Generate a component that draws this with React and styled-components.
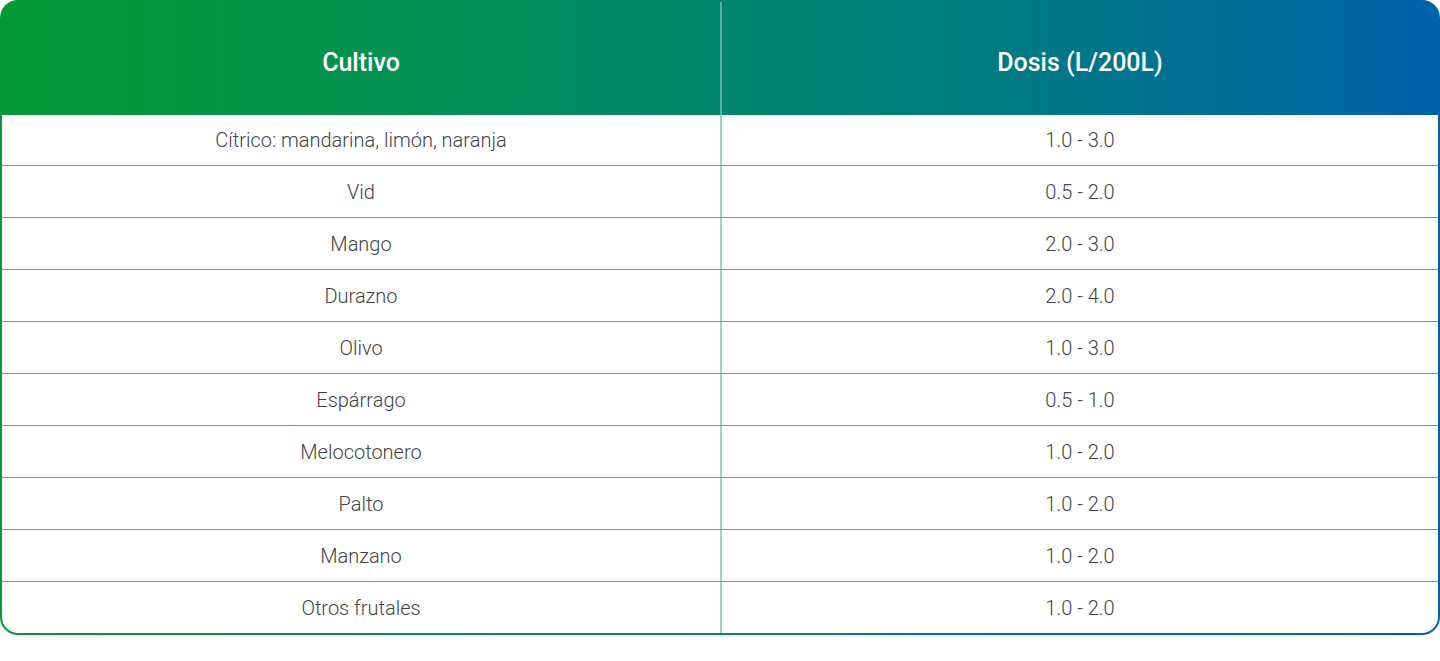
import React from 'react';
import styled, { createGlobalStyle } from 'styled-components';

const GlobalStyle = createGlobalStyle`
  *, *::before, *::after {
    box-sizing: border-box;
  }
  body {
    margin: 0;
    background: #ffffff;
    font-family: Roboto, "Liberation Sans", Arial, sans-serif;
  }
`;

const Frame = styled.div`
  background: linear-gradient(90deg, #049a36 0%, #05924f 25%, #00876d 50%, #007a82 70%, #0063ab 100%);
  padding: 2px;
  border-radius: 18px;
`;

const Inner = styled.div`
  border-radius: 16px;
  overflow: hidden;
`;

const Header = styled.div`
  display: grid;
  grid-template-columns: 1fr 1fr;
  height: 113px;
`;

const HeadCell = styled.div`
  display: flex;
  align-items: center;
  justify-content: center;
  padding-top: 8px;
  color: #ffffff;
  font-size: 25px;
  font-weight: 500;
  border-left: ${({ $divider }) => ($divider ? '2px solid rgba(255,255,255,0.35)' : 'none')};
`;

const Body = styled.div`
  background: #ffffff;
`;

const Row = styled.div`
  display: grid;
  grid-template-columns: 1fr 1fr;
  height: ${({ $first }) => ($first ? '50px' : '52px')};
  border-top: ${({ $first }) => ($first ? 'none' : '1px solid #4cae78')};
`;

const Cell = styled.div`
  display: flex;
  align-items: center;
  justify-content: center;
  color: #444444;
  font-size: 20px;
  font-weight: 300;
  border-left: ${({ $divider }) => ($divider ? '2px solid #93d9b6' : 'none')};
`;

const rows = [
  ['Cítrico: mandarina, limón, naranja', '1.0 - 3.0'],
  ['Vid', '0.5 - 2.0'],
  ['Mango', '2.0 - 3.0'],
  ['Durazno', '2.0 - 4.0'],
  ['Olivo', '1.0 - 3.0'],
  ['Espárrago', '0.5 - 1.0'],
  ['Melocotonero', '1.0 - 2.0'],
  ['Palto', '1.0 - 2.0'],
  ['Manzano', '1.0 - 2.0'],
  ['Otros frutales', '1.0 - 2.0'],
];

const App = () => (
  <>
    <GlobalStyle />
    <Frame>
      <Inner>
        <Header>
          <HeadCell>Cultivo</HeadCell>
          <HeadCell $divider>Dosis (L/200L)</HeadCell>
        </Header>
        <Body>
          {rows.map(([crop, dose], i) => (
            <Row key={crop} $first={i === 0}>
              <Cell>{crop}</Cell>
              <Cell $divider>{dose}</Cell>
            </Row>
          ))}
        </Body>
      </Inner>
    </Frame>
  </>
);

export default App;
